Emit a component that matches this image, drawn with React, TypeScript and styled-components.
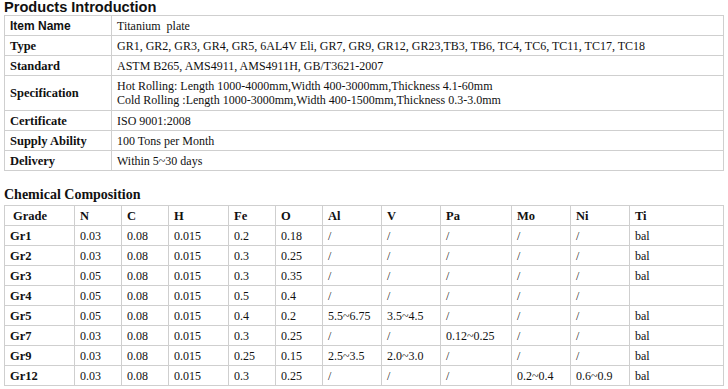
import styled, { createGlobalStyle } from "styled-components";

const GlobalStyle = createGlobalStyle`
  html, body {
    margin: 0;
    padding: 0;
    background: #fff;
  }
  body {
    font-family: "Liberation Serif", "Times New Roman", serif;
    color: #111;
  }
`;

const intro: [string, string[]][] = [
  ["Item Name", ["Titanium  plate"]],
  [
    "Type",
    [
      "GR1, GR2, GR3, GR4, GR5, 6AL4V Eli, GR7, GR9, GR12, GR23,TB3, TB6, TC4, TC6, TC11, TC17, TC18",
    ],
  ],
  ["Standard", ["ASTM B265, AMS4911, AMS4911H, GB/T3621-2007"]],
  [
    "Specification",
    [
      "Hot Rolling: Length 1000-4000mm,Width 400-3000mm,Thickness 4.1-60mm",
      "Cold Rolling :Length 1000-3000mm,Width 400-1500mm,Thickness 0.3-3.0mm",
    ],
  ],
  ["Certificate", ["ISO 9001:2008"]],
  ["Supply Ability", ["100 Tons per Month"]],
  ["Delivery", ["Within 5~30 days"]],
];

const colWidths = [70, 47, 47, 60, 47, 47, 59, 59, 71, 59, 59, 94];
const headers = ["Grade", "N", "C", "H", "Fe", "O", "Al", "V", "Pa", "Mo", "Ni", "Ti"];

const rows: string[][] = [
  ["Gr1", "0.03", "0.08", "0.015", "0.2", "0.18", "/", "/", "/", "/", "/", "bal"],
  ["Gr2", "0.03", "0.08", "0.015", "0.3", "0.25", "/", "/", "/", "/", "/", "bal"],
  ["Gr3", "0.05", "0.08", "0.015", "0.3", "0.35", "/", "/", "/", "/", "/", "bal"],
  ["Gr4", "0.05", "0.08", "0.015", "0.5", "0.4", "/", "/", "/", "/", "/", ""],
  ["Gr5", "0.05", "0.08", "0.015", "0.4", "0.2", "5.5~6.75", "3.5~4.5", "/", "/", "/", "bal"],
  ["Gr7", "0.03", "0.08", "0.015", "0.3", "0.25", "/", "/", "0.12~0.25", "/", "/", "bal"],
  ["Gr9", "0.03", "0.08", "0.015", "0.25", "0.15", "2.5~3.5", "2.0~3.0", "/", "/", "/", "bal"],
  ["Gr12", "0.03", "0.08", "0.015", "0.3", "0.25", "/", "/", "/", "0.2~0.4", "0.6~0.9", "bal"],
];

const App = (): JSX.Element => {
  return (
    <Page>
      <GlobalStyle />
      <SectionTitle>Products Introduction</SectionTitle>
      <IntroTable>
        <colgroup>
          <col style={{ width: 107 }} />
          <col />
        </colgroup>
        <tbody>
          {intro.map(([label, lines]) => (
            <IntroRow key={label} $tall={lines.length > 1}>
              <Label $sans={label === "Item Name"}>{label}</Label>
              <Value>
                {lines.map((l) => (
                  <div key={l}>{l}</div>
                ))}
              </Value>
            </IntroRow>
          ))}
        </tbody>
      </IntroTable>
      <ChemTitle>Chemical Composition</ChemTitle>
      <ChemTable>
        <colgroup>
          {colWidths.map((w, i) => (
            <col key={i} style={{ width: w }} />
          ))}
        </colgroup>
        <thead>
          <tr>
            {headers.map((h, i) => (
              <HeadCell key={h} $first={i === 0}>
                {h}
              </HeadCell>
            ))}
          </tr>
        </thead>
        <tbody>
          {rows.map((r) => (
            <tr key={r[0]}>
              {r.map((c, i) =>
                i === 0 ? <GradeCell key={i}>{c}</GradeCell> : <Cell key={i}>{c}</Cell>
              )}
            </tr>
          ))}
        </tbody>
      </ChemTable>
    </Page>
  );
};

export default App;

const Page = styled.div`
  width: 728px;
  padding: 0 5px 0 4px;
  box-sizing: border-box;
`;

const SectionTitle = styled.h2`
  margin: 0;
  font-family: "Liberation Sans", Arial, sans-serif;
  font-size: 14.6px;
  line-height: 15px;
  font-weight: 700;
  color: #111;
`;

const IntroTable = styled.table`
  width: 720px;
  border-collapse: collapse;
  table-layout: fixed;
  font-size: 12px;
  td {
    border: 1px solid #cfcfcf;
    padding: 0 5px;
    vertical-align: middle;
  }
`;

const IntroRow = styled.tr<{ $tall?: boolean }>`
  height: ${(p) => (p.$tall ? "35px" : "20px")};
  line-height: 14px;
`;

const Label = styled.td<{ $sans?: boolean }>`
  font-weight: 700;
  font-family: ${(p) =>
    p.$sans
      ? `"Liberation Sans", Arial, sans-serif`
      : `"Liberation Serif", "Times New Roman", serif`};
  font-size: ${(p) => (p.$sans ? "12px" : "12.5px")};
`;

const Value = styled.td`
  white-space: pre;
`;

const ChemTitle = styled.h3`
  margin: 16px 0 2px;
  font-size: 14px;
  line-height: 16px;
  font-weight: 700;
  color: #111;
`;

const ChemTable = styled.table`
  width: 720px;
  border-collapse: collapse;
  table-layout: fixed;
  font-size: 12px;
  tr {
    height: 20px;
  }
  th,
  td {
    border: 1px solid #cfcfcf;
    padding: 0 5px;
    text-align: left;
    vertical-align: middle;
    line-height: 14px;
  }
`;

const HeadCell = styled.th<{ $first?: boolean }>`
  font-weight: 700;
  font-size: 12.5px;
  padding-left: ${(p) => (p.$first ? "8px" : "5px")} !important;
`;

const GradeCell = styled.td`
  font-weight: 700;
  font-size: 12.5px;
`;

const Cell = styled.td`
  font-weight: 400;
`;
